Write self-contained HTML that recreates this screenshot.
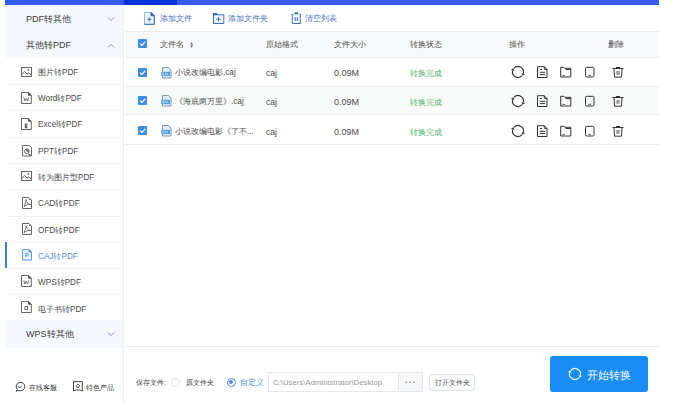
<!DOCTYPE html>
<html><head><meta charset="utf-8">
<style>
*{margin:0;padding:0;box-sizing:border-box;}
html,body{width:678px;height:418px;overflow:hidden;background:#fff;}
body{position:relative;font-family:"Liberation Sans",sans-serif;color:#333;}
.a{position:absolute;white-space:nowrap;line-height:1;}
svg.a{overflow:visible;}
.gh{left:6px;width:117px;background:#f5f8fd;}
.gt{font-size:9px;color:#3a3a3a;left:26px;margin-top:0.7px;}
.si{left:8px;width:112px;height:1px;background:#eff1f4;}
.st{font-size:8.2px;color:#4a4a4a;left:38px;}
.hline{height:1px;background:#ebecee;}
.th{font-size:8.2px;color:#4a4a4a;}
.td{font-size:8.2px;color:#4a4a4a;}
.num{font-size:9px;}
.cb{width:9px;height:9px;}
.green{color:#4db36b;}
.tb{font-size:8.4px;color:#4372c4;}
</style></head><body>
<div class="a" style="left:5px;top:0;width:119px;height:5px;background:#3659f0"></div>
<div class="a" style="left:124px;top:0;width:535px;height:5px;background:#3659f0"></div>
<div class="a" style="left:124px;top:0;width:53px;height:5px;background:#0834d8"></div>
<div class="a" style="left:123px;top:5px;width:1px;height:400px;background:#edeff2"></div>

<!-- sidebar group headers -->
<div class="a gh" style="top:5px;height:26px;"></div>
<div class="a gh" style="top:31px;height:27px;"></div>
<div class="a gt" style="top:14px;">PDF转其他</div>
<div class="a gt" style="top:40px;">其他转PDF</div>
<svg class="a" width="8" height="4" style="left:107px;top:17px;"><path d="M0.5 0.5L4 3.5L7.5 0.5" stroke="#7f97c2" fill="none" stroke-width="0.9"/></svg>
<svg class="a" width="8" height="4" style="left:107px;top:44px;"><path d="M0.5 3.5L4 0.5L7.5 3.5" stroke="#7f97c2" fill="none" stroke-width="0.9"/></svg>

<!-- sidebar items -->
<div class="a si" style="top:84px"></div>
<div class="a si" style="top:110px"></div>
<div class="a si" style="top:137px"></div>
<div class="a si" style="top:163px"></div>
<div class="a si" style="top:189px"></div>
<div class="a si" style="top:216px"></div>
<div class="a si" style="top:242px"></div>
<div class="a si" style="top:268px"></div>
<div class="a si" style="top:294px"></div>

<!-- icons -->
<svg class="a" width="11" height="10" style="left:21px;top:67px" fill="none" stroke="#555" stroke-width="0.9">
 <rect x="0.5" y="0.5" width="10" height="9"/>
 <path d="M0.8 7.5L3.5 4.5L6 7L7.5 5.8L10.2 7.8"/>
 <circle cx="7.3" cy="2.8" r="0.9" fill="#555" stroke="none"/>
</svg>
<svg class="a" width="11" height="12" style="left:21px;top:92px" fill="none" stroke="#555" stroke-width="0.9">
 <path d="M0.5 0.5H7.5L10.3 3.3V11.5H0.5Z"/><path d="M7.5 0.5V3.3H10.3" fill="#555"/>
 <path d="M2.8 5.3L3.8 9L5.2 6.3L6.6 9L7.6 5.3" stroke-width="0.8"/>
</svg>
<svg class="a" width="11" height="12" style="left:21px;top:118px" fill="none" stroke="#555" stroke-width="0.9">
 <path d="M0.5 0.5H7.5L10.3 3.3V11.5H0.5Z"/><path d="M7.5 0.5V3.3H10.3" fill="#555"/>
 <path d="M6.5 6.1H4.4V9.6H6.5M4.4 7.85H6.2" stroke-width="1.1"/>
</svg>
<svg class="a" width="11" height="12" style="left:22px;top:145px" fill="none" stroke="#555" stroke-width="0.9">
 <path d="M0.5 0.5H7.5L9.5 2.5V11H0.5Z"/>
 <circle cx="4.8" cy="6.3" r="2.3"/><path d="M4.8 4V6.3H7.1" fill="#777"/>
 <path d="M6.5 9L8.5 10.5" stroke-width="1.2"/>
</svg>
<svg class="a" width="11" height="10" style="left:21px;top:171px" fill="none" stroke="#555" stroke-width="0.9">
 <rect x="0.5" y="0.5" width="10" height="9"/>
 <path d="M0.8 7.5L3.5 4.5L6 7L7.5 5.8L10.2 7.8"/>
 <circle cx="7.3" cy="2.8" r="0.9" fill="#555" stroke="none"/>
</svg>
<svg class="a" width="11" height="12" style="left:22px;top:197px" fill="none" stroke="#555" stroke-width="0.9">
 <path d="M0.5 0.5H7L9.5 3V11.5H0.5Z"/><circle cx="7.6" cy="2.4" r="0.7" fill="#555" stroke="none"/>
 <path d="M4 2.5C4.5 5 6 7 8.5 7.5C6 7.5 3.5 8 2 9.5C3 7.5 4 5 4 2.5Z" stroke-width="0.8"/>
</svg>
<svg class="a" width="11" height="12" style="left:22px;top:223px" fill="none" stroke="#555" stroke-width="0.9">
 <path d="M0.5 0.5H7L9.5 3V11.5H0.5Z"/><circle cx="7.6" cy="2.4" r="0.7" fill="#555" stroke="none"/>
 <path d="M4 2.5C4.5 5 6 7 8.5 7.5C6 7.5 3.5 8 2 9.5C3 7.5 4 5 4 2.5Z" stroke-width="0.8"/>
</svg>
<svg class="a" width="11" height="12" style="left:22px;top:249px" fill="none" stroke="#4a8ee0" stroke-width="0.9">
 <path d="M0.5 0.5H7L9.5 3V11H0.5Z" fill="#eaf4fd"/><path d="M7 0.5V3H9.5" fill="#4a8ee0"/>
 <path d="M3.8 8V4.5H5.2C6.2 4.5 6.5 5 6.5 5.7C6.5 6.4 6 6.8 5.2 6.8H3.8" stroke-width="0.9"/>
</svg>
<svg class="a" width="11" height="12" style="left:21px;top:275px" fill="none" stroke="#555" stroke-width="0.9">
 <path d="M0.5 0.5H7.5L10.3 3.3V11.5H0.5Z"/><path d="M7.5 0.5V3.3H10.3" fill="#555"/>
 <path d="M2.8 5.3L3.8 9L5.2 6.3L6.6 9L7.6 5.3" stroke-width="0.8"/>
</svg>
<svg class="a" width="11" height="12" style="left:21px;top:301px" fill="none" stroke="#555" stroke-width="0.9">
 <path d="M0.5 0.5H7.5L10.3 3.3V11.5H0.5Z"/><path d="M7.5 0.5V3.3H10.3" fill="#555"/>
 <rect x="4" y="5.5" width="2.5" height="3.2" stroke-width="0.8"/>
</svg>

<div class="a st" style="top:69px">图片转PDF</div>
<div class="a st" style="top:95px">Word转PDF</div>
<div class="a st" style="top:121px">Excel转PDF</div>
<div class="a st" style="top:148px">PPT转PDF</div>
<div class="a st" style="top:174px">转为图片型PDF</div>
<div class="a st" style="top:200px">CAD转PDF</div>
<div class="a st" style="top:227px">OFD转PDF</div>
<div class="a st" style="top:253px;color:#5a8fd6">CAJ转PDF</div>
<div class="a st" style="top:279px">WPS转PDF</div>
<div class="a st" style="top:306px">电子书转PDF</div>
<div class="a" style="left:5px;top:242px;width:2px;height:26px;background:#3f7cc8"></div>

<div class="a gh" style="top:320px;height:28px;"></div>
<div class="a gt" style="top:329px;">WPS转其他</div>
<svg class="a" width="8" height="4" style="left:107px;top:332px;"><path d="M0.5 0.5L4 3.5L7.5 0.5" stroke="#7f97c2" fill="none" stroke-width="0.9"/></svg>

<!-- table -->
<div class="a hline" style="left:125px;top:31px;width:534px;"></div>
<div class="a" style="left:125px;top:32px;width:534px;height:25px;background:#f8f9fa"></div>
<div class="a hline" style="left:125px;top:57px;width:534px;"></div>
<div class="a" style="left:125px;top:86px;width:534px;height:28px;background:#f9fafa"></div>
<div class="a hline" style="left:125px;top:86px;width:534px;"></div>
<div class="a hline" style="left:125px;top:114px;width:534px;"></div>
<div class="a hline" style="left:125px;top:144px;width:534px;"></div>

<!-- toolbar -->
<svg class="a" width="11" height="13" style="left:144px;top:12px" fill="none" stroke-width="0.9">
 <path d="M0.5 0.5H7L10.3 3.8V12.3H0.5Z" fill="#eef7fd" stroke="#7fb2e0"/>
 <path d="M7 0.5L10.3 3.8V12.3H0.5" stroke="#2f5ea8"/><path d="M7 0.5V3.8H10.3Z" fill="#2f5ea8" stroke="#2f5ea8"/>
 <path d="M3.2 7.3H7.4M5.3 5.2V9.4" stroke="#2f5ea8"/>
</svg>
<svg class="a" width="12" height="11" style="left:213px;top:13px" fill="none" stroke="#2f5ea8" stroke-width="0.9">
 <path d="M0.5 0.5H3.5L4.5 1.8H10.8V10.5H0.5Z" fill="#eef7fd"/><path d="M0.5 0.5H3.5L4.5 1.8H0.5Z" fill="#2f5ea8"/>
 <path d="M3.3 6.3H7.7M5.5 4.1V8.5"/>
</svg>
<svg class="a" width="11" height="12" style="left:291px;top:12px" fill="none" stroke="#2f5ea8" stroke-width="0.9">
 <path d="M0.3 2.3H10.3"/><path d="M4 1.8V0.8H6.6V1.8" fill="#2f5ea8"/>
 <path d="M1.3 2.3V11.5H9.3V2.3" fill="#eef7fd"/>
 <path d="M4.3 5.3V9M6.3 5.3V9"/>
</svg>
<div class="a tb" style="left:160px;top:14px">添加文件</div>
<div class="a tb" style="left:228px;top:14px">添加文件夹</div>
<div class="a tb" style="left:305px;top:14px">清空列表</div>

<div class="a th" style="left:160px;top:41px">文件名</div>
<svg class="a" width="4" height="6" style="left:189.5px;top:42px"><path d="M1.6 0.3L3 2.4H0.2ZM1.6 5.7L3 3.6H0.2Z" fill="#555"/></svg>
<div class="a th" style="left:266px;top:41px">原始格式</div>
<div class="a th" style="left:334px;top:41px">文件大小</div>
<div class="a th" style="left:410px;top:41px">转换状态</div>
<div class="a th" style="left:509px;top:41px">操作</div>
<div class="a th" style="left:608px;top:41px">删除</div>

<svg class="a cb" style="left:138px;top:39px" width="9" height="9"><rect width="9" height="9" rx="1" fill="#3f8be2"/><path d="M2 4.6L3.9 6.4L7.2 2.9" stroke="#fff" stroke-width="1.2" fill="none"/></svg>
<svg class="a cb" style="left:138px;top:67.5px" width="9" height="9"><rect width="9" height="9" rx="1" fill="#3f8be2"/><path d="M2 4.6L3.9 6.4L7.2 2.9" stroke="#fff" stroke-width="1.2" fill="none"/></svg>
<svg class="a cb" style="left:138px;top:96px" width="9" height="9"><rect width="9" height="9" rx="1" fill="#3f8be2"/><path d="M2 4.6L3.9 6.4L7.2 2.9" stroke="#fff" stroke-width="1.2" fill="none"/></svg>
<svg class="a cb" style="left:138px;top:126px" width="9" height="9"><rect width="9" height="9" rx="1" fill="#3f8be2"/><path d="M2 4.6L3.9 6.4L7.2 2.9" stroke="#fff" stroke-width="1.2" fill="none"/></svg>

<!-- caj file icons -->
<svg class="a" width="12" height="12" style="left:161px;top:66.5px"><path d="M1.5 0.5H7.5L10 3V11H1.5Z" fill="#dff0fc" stroke="#6a7c98" stroke-width="0.8"/><rect x="0.3" y="4.8" width="8.7" height="4.3" fill="#4c9de2"/><path d="M1.8 5.9H3.2M1.8 8H3.2M1.8 5.9V8M4 8L4.6 5.9L5.2 8M6.4 5.9V7.8L5.9 8" stroke="#fff" stroke-width="0.55" fill="none"/></svg>
<svg class="a" width="12" height="12" style="left:161px;top:95px"><path d="M1.5 0.5H7.5L10 3V11H1.5Z" fill="#dff0fc" stroke="#6a7c98" stroke-width="0.8"/><rect x="0.3" y="4.8" width="8.7" height="4.3" fill="#4c9de2"/><path d="M1.8 5.9H3.2M1.8 8H3.2M1.8 5.9V8M4 8L4.6 5.9L5.2 8M6.4 5.9V7.8L5.9 8" stroke="#fff" stroke-width="0.55" fill="none"/></svg>
<svg class="a" width="12" height="12" style="left:161px;top:125px"><path d="M1.5 0.5H7.5L10 3V11H1.5Z" fill="#dff0fc" stroke="#6a7c98" stroke-width="0.8"/><rect x="0.3" y="4.8" width="8.7" height="4.3" fill="#4c9de2"/><path d="M1.8 5.9H3.2M1.8 8H3.2M1.8 5.9V8M4 8L4.6 5.9L5.2 8M6.4 5.9V7.8L5.9 8" stroke="#fff" stroke-width="0.55" fill="none"/></svg>

<div class="a td" style="left:175px;top:69px">小说改编电影.caj</div>
<div class="a td" style="left:175px;top:98px">《海底两万里》.caj</div>
<div class="a td" style="left:175px;top:128px">小说改编电影《了不...</div>
<div class="a td" style="left:266px;top:69px;font-size:8.6px">caj</div>
<div class="a td" style="left:266px;top:98px;font-size:8.6px">caj</div>
<div class="a td" style="left:266px;top:128px;font-size:8.6px">caj</div>
<div class="a td num" style="left:334px;top:69px">0.09M</div>
<div class="a td num" style="left:334px;top:98px">0.09M</div>
<div class="a td num" style="left:334px;top:128px">0.09M</div>
<div class="a td green" style="left:410px;top:69px;font-size:8.4px">转换完成</div>
<div class="a td green" style="left:410px;top:98px;font-size:8.4px">转换完成</div>
<div class="a td green" style="left:410px;top:128px;font-size:8.4px">转换完成</div>

<!-- action icons row template -->
<svg class="a" width="140" height="14" style="left:510px;top:65px" fill="none" stroke="#333" stroke-width="1">
 <g id="acts">
 <path d="M3.91 3.32 A5.50 5.50 0 0 1 13.31 8.42 M12.09 10.68 A5.50 5.50 0 0 1 2.69 5.58" stroke-width="1.15"/>
 <path d="M12.69 10.74 L15.05 8.89 L11.57 7.96 Z M3.31 3.26 L0.95 5.11 L4.43 6.04 Z" fill="#333" stroke="none"/>
 <path d="M27.5 1.7H34.3L37 4.4V12.5H27.5Z"/><path d="M34.3 1.7V4.4H37"/>
 <path d="M30 4.5H32M29.8 7.3H35M29.8 9.6H35"/>
 <path d="M50.7 2.3H54L55 3.3H60.8V12H50.7Z" stroke-linejoin="round"/><path d="M55 3.3L56 4.5H60.8" />
 <path d="M52.3 10.5H55" stroke-width="1.2" stroke="#777"/>
 <rect x="75.5" y="2.3" width="8.5" height="9.7" rx="1.3"/><path d="M78.4 10.4H81" stroke-width="1.2" stroke="#777"/>
 <path d="M102.5 3.5H113.5"/><path d="M106 2.6H110" stroke-width="1.2"/>
 <path d="M104 3.5L104.5 12.2H111.5L112 3.5"/><rect x="106.3" y="6" width="3.4" height="3.8" fill="#999" stroke="none"/>
 </g>
</svg>
<svg class="a" width="140" height="14" style="left:510px;top:94px" fill="none" stroke="#333" stroke-width="1">
 <path d="M3.91 3.32 A5.50 5.50 0 0 1 13.31 8.42 M12.09 10.68 A5.50 5.50 0 0 1 2.69 5.58" stroke-width="1.15"/>
 <path d="M12.69 10.74 L15.05 8.89 L11.57 7.96 Z M3.31 3.26 L0.95 5.11 L4.43 6.04 Z" fill="#333" stroke="none"/>
 <path d="M27.5 1.7H34.3L37 4.4V12.5H27.5Z"/><path d="M34.3 1.7V4.4H37"/>
 <path d="M30 4.5H32M29.8 7.3H35M29.8 9.6H35"/>
 <path d="M50.7 2.3H54L55 3.3H60.8V12H50.7Z" stroke-linejoin="round"/><path d="M55 3.3L56 4.5H60.8" />
 <path d="M52.3 10.5H55" stroke-width="1.2" stroke="#777"/>
 <rect x="75.5" y="2.3" width="8.5" height="9.7" rx="1.3"/><path d="M78.4 10.4H81" stroke-width="1.2" stroke="#777"/>
 <path d="M102.5 3.5H113.5"/><path d="M106 2.6H110" stroke-width="1.2"/>
 <path d="M104 3.5L104.5 12.2H111.5L112 3.5"/><rect x="106.3" y="6" width="3.4" height="3.8" fill="#999" stroke="none"/>
</svg>
<svg class="a" width="140" height="14" style="left:510px;top:124px" fill="none" stroke="#333" stroke-width="1">
 <path d="M3.91 3.32 A5.50 5.50 0 0 1 13.31 8.42 M12.09 10.68 A5.50 5.50 0 0 1 2.69 5.58" stroke-width="1.15"/>
 <path d="M12.69 10.74 L15.05 8.89 L11.57 7.96 Z M3.31 3.26 L0.95 5.11 L4.43 6.04 Z" fill="#333" stroke="none"/>
 <path d="M27.5 1.7H34.3L37 4.4V12.5H27.5Z"/><path d="M34.3 1.7V4.4H37"/>
 <path d="M30 4.5H32M29.8 7.3H35M29.8 9.6H35"/>
 <path d="M50.7 2.3H54L55 3.3H60.8V12H50.7Z" stroke-linejoin="round"/><path d="M55 3.3L56 4.5H60.8" />
 <path d="M52.3 10.5H55" stroke-width="1.2" stroke="#777"/>
 <rect x="75.5" y="2.3" width="8.5" height="9.7" rx="1.3"/><path d="M78.4 10.4H81" stroke-width="1.2" stroke="#777"/>
 <path d="M102.5 3.5H113.5"/><path d="M106 2.6H110" stroke-width="1.2"/>
 <path d="M104 3.5L104.5 12.2H111.5L112 3.5"/><rect x="106.3" y="6" width="3.4" height="3.8" fill="#999" stroke="none"/>
</svg>

<!-- footer -->
<div class="a hline" style="left:125px;top:346px;width:534px;"></div>
<div class="a" style="left:136px;top:379px;font-size:7.2px;color:#444">保存文件:</div>
<div class="a" style="left:171px;top:377.5px;width:9px;height:9px;border:1px solid #e2e4e8;border-radius:50%"></div>
<div class="a" style="left:186px;top:379px;font-size:7.2px;color:#444">原文件夹</div>
<div class="a" style="left:226.5px;top:377.5px;width:9px;height:9px;border:1px solid #4a8ee0;border-radius:50%"></div>
<div class="a" style="left:229px;top:380px;width:4px;height:4px;background:#4a8ee0;border-radius:50%"></div>
<div class="a" style="left:240px;top:379px;font-size:7.5px;color:#4a8ee0">自定义</div>
<div class="a" style="left:268px;top:372px;width:155px;height:20px;border:1px solid #e6e8ec;background:#fff"></div>
<div class="a" style="left:398px;top:372px;width:25px;height:20px;border:1px solid #e6e8ec;background:#f6f7f9"></div>
<div class="a" style="left:273px;top:379px;font-size:7.8px;color:#999">C:\Users\Administrator\Desktop</div>
<svg class="a" width="12" height="3" style="left:404.5px;top:381px"><circle cx="1.2" cy="1.2" r="0.8" fill="#777"/><circle cx="5" cy="1.2" r="0.8" fill="#777"/><circle cx="8.8" cy="1.2" r="0.8" fill="#777"/></svg>
<div class="a" style="left:429px;top:373.5px;width:46px;height:17px;border:1px solid #dfe2e6;border-radius:3px;background:#fafbfc"></div>
<div class="a" style="left:435px;top:379px;font-size:7px;color:#555">打开文件夹</div>

<div class="a" style="left:550px;top:356px;width:98px;height:36px;background:#1a8cf6;border-radius:3px"></div>
<svg class="a" width="14" height="14" style="left:568px;top:367px" fill="none" stroke="#fff" stroke-width="1.1">
 <path d="M2.91 3.32 A5.50 5.50 0 0 1 12.31 8.42 M11.09 10.68 A5.50 5.50 0 0 1 1.69 5.58"/>
 <path d="M11.69 10.74 L14.05 8.89 L10.57 7.96 Z M2.31 3.26 L-0.05 5.11 L3.43 6.04 Z" fill="#fff" stroke="none"/>
</svg>
<div class="a" style="left:587px;top:369.7px;font-size:11px;color:#fff">开始转换</div>

<svg class="a" width="11" height="11" style="left:15px;top:381px" fill="none" stroke="#333" stroke-width="0.9">
 <path d="M2.2 8.3A4.3 4.3 0 1 1 3.8 9.5L1.2 10.2Z" stroke-linejoin="round"/>
 <path d="M3.4 5.6Q5 7.2 6.6 5.6"/>
</svg>
<div class="a" style="left:29px;top:383.5px;font-size:7px;color:#333">在线客服</div>
<svg class="a" width="11" height="11" style="left:72.5px;top:380.5px" fill="none" stroke="#333" stroke-width="0.9">
 <path d="M0.5 10V0.6H9.3V10L7 9H3Z"/>
 <path d="M4.9 3.2L6.5 4.4L5.9 6.3H3.9L3.3 4.4Z" stroke-width="0.8"/>
</svg>
<div class="a" style="left:86px;top:383.5px;font-size:7px;color:#333">特色产品</div>
</body></html>
